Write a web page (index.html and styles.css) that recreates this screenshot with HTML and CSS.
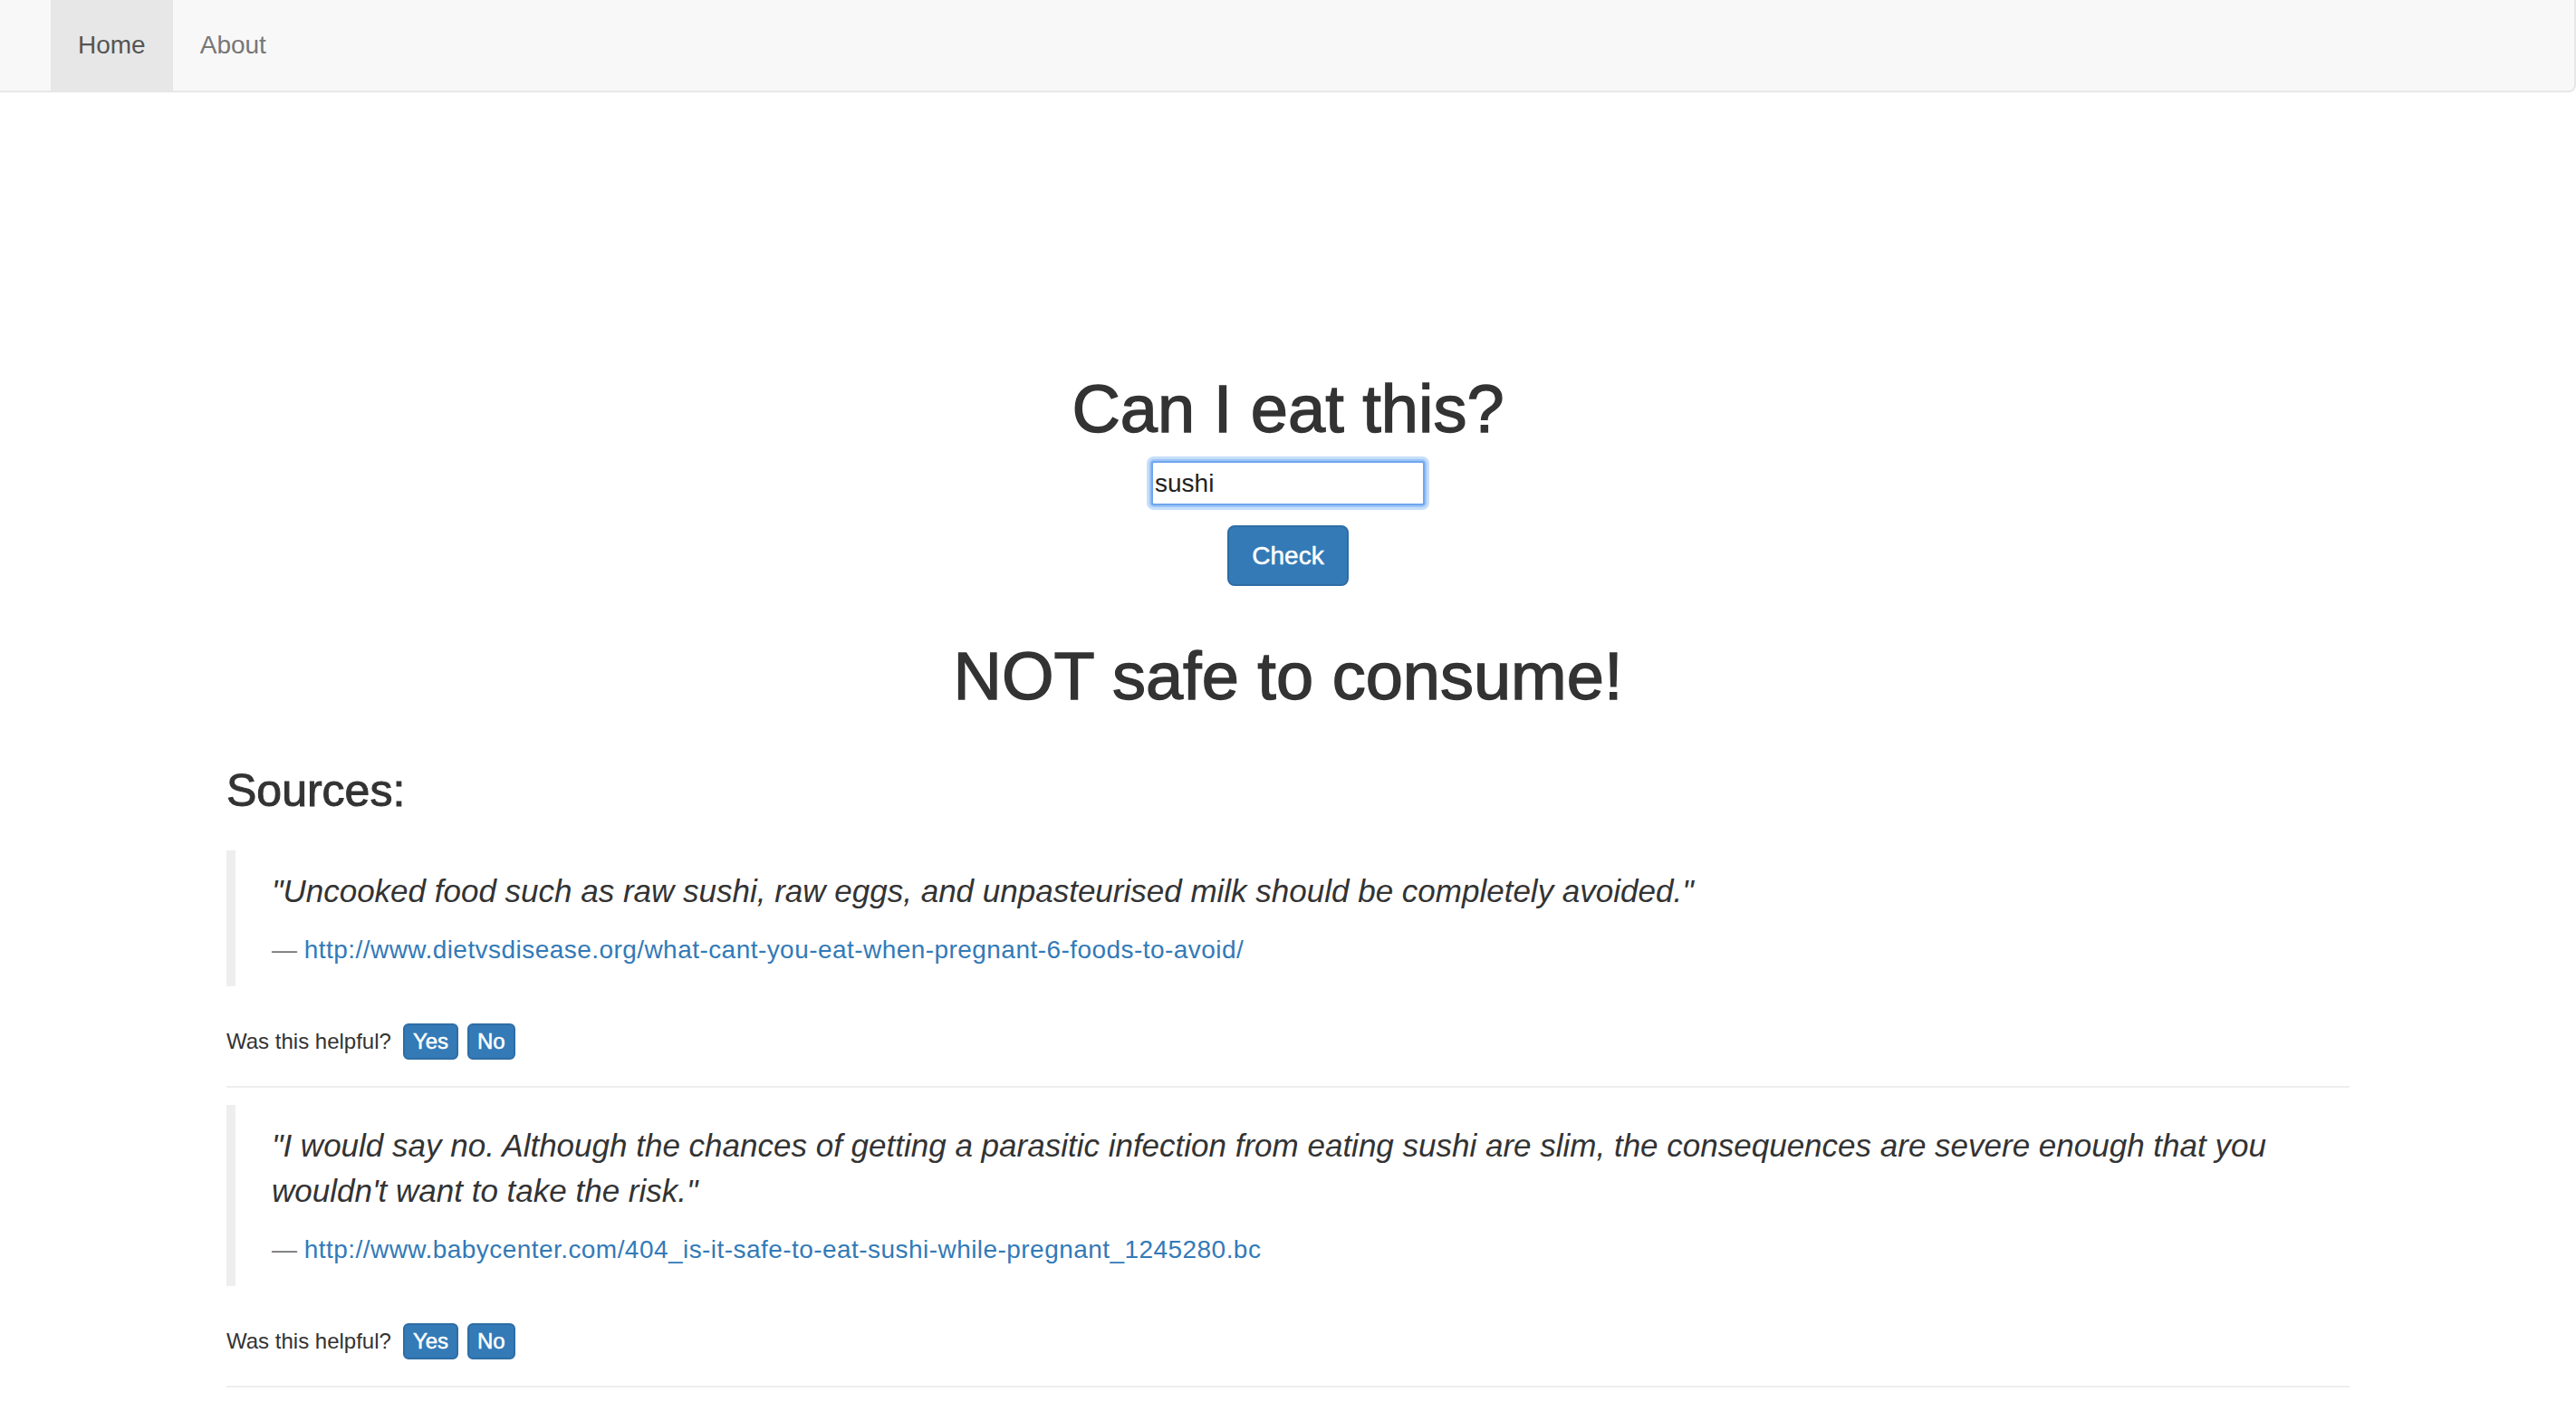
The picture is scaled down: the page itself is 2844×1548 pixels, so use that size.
FILE: index.html
```html
<!DOCTYPE html>
<html lang="en">
<head>
<meta charset="utf-8">
<title>Can I eat this?</title>
<link rel="stylesheet" href="styles.css">
</head>
<body>
<nav class="navbar">
  <ul class="nav">
    <li class="nav-item active"><a href="#">Home</a></li>
    <li class="nav-item"><a href="#">About</a></li>
  </ul>
</nav>
<main class="container">
  <section class="hero">
    <h1 class="title">Can I eat this?</h1>
    <form class="search">
      <input class="search-input" type="text" value="sushi">
      <button class="btn btn-check" type="button">Check</button>
    </form>
    <h1 class="verdict">NOT safe to consume!</h1>
  </section>
  <h3 class="sources-title">Sources:</h3>
  <div class="source">
    <blockquote class="quote">
      <p>"Uncooked food such as raw sushi, raw eggs, and unpasteurised milk should be completely avoided."</p>
      <footer><a href="#">http://www.dietvsdisease.org/what-cant-you-eat-when-pregnant-6-foods-to-avoid/</a></footer>
    </blockquote>
    <div class="feedback">
      <span class="feedback-label">Was this helpful?</span>
      <button class="btn btn-xs" type="button">Yes</button>
      <button class="btn btn-xs" type="button">No</button>
    </div>
    <hr class="divider">
  </div>
  <div class="source">
    <blockquote class="quote">
      <p>"I would say no. Although the chances of getting a parasitic infection from eating sushi are slim, the consequences are severe enough that you wouldn't want to take the risk."</p>
      <footer><a href="#">http://www.babycenter.com/404_is-it-safe-to-eat-sushi-while-pregnant_1245280.bc</a></footer>
    </blockquote>
    <div class="feedback">
      <span class="feedback-label">Was this helpful?</span>
      <button class="btn btn-xs" type="button">Yes</button>
      <button class="btn btn-xs" type="button">No</button>
    </div>
    <hr class="divider">
  </div>
</main>
</body>
</html>
```
FILE: styles.css
```css
* { box-sizing: border-box; }

html, body {
  margin: 0;
  padding: 0;
  background: #fff;
}

body {
  font-family: "Liberation Sans", Arial, Helvetica, sans-serif;
  font-size: 28px;
  line-height: 40px;
  color: #333;
}

a { color: #337ab7; text-decoration: none; }

/* Navbar */
.navbar {
  height: 102px;
  background: #f8f8f8;
  border-bottom: 2px solid #e7e7e7;
  border-right: 2px solid #e7e7e7;
  border-bottom-right-radius: 8px;
  padding-left: 56px;
}

.nav {
  display: flex;
  margin: 0;
  padding: 0;
  list-style: none;
  height: 100px;
}

.nav-item a {
  display: block;
  padding: 30px 30px;
  line-height: 40px;
  color: #777;
}

.nav-item.active a {
  background: #e7e7e7;
  color: #555;
}

/* Content */
.container {
  width: 2344px;
  margin: 0 auto;
}

.hero {
  display: flex;
  flex-direction: column;
  align-items: center;
  padding-top: 310px;
}

.title, .verdict {
  margin: 0;
  font-size: 74px;
  line-height: 79px;
  font-weight: 400;
  -webkit-text-stroke: 1.4px #333;
  color: #333;
}

.search {
  display: flex;
  flex-direction: column;
  align-items: center;
  margin: 18px 0 0;
}

.search-input {
  width: 302px;
  height: 49px;
  padding: 0 2px;
  font-family: "Liberation Sans", Arial, sans-serif;
  font-size: 28px;
  color: #222;
  border: 2px solid #6fa6ee;
  border-radius: 3px;
  box-shadow: 0 0 0 2px #9cc4f6, 0 0 0 5px #c6def9;
  outline: none;
  background: #fff;
}

.btn {
  font-family: "Liberation Sans", Arial, sans-serif;
  background: #337ab7;
  color: #fff;
  border: 2px solid #2e6da4;
  cursor: pointer;
  -webkit-text-stroke: 0.5px #fff;
}

.btn-check {
  margin-top: 22px;
  width: 134px;
  height: 67px;
  font-size: 28px;
  border-radius: 8px;
  padding: 0;
}

.verdict {
  margin-top: 60px;
}

.sources-title {
  margin: 61px 0 0;
  font-size: 50px;
  line-height: 53px;
  font-weight: 400;
  -webkit-text-stroke: 1px #333;
}

/* Quotes */
.quote {
  margin: 39px 0 0;
  padding: 20px 40px;
  border-left: 10px solid #eee;
  font-size: 35px;
  line-height: 50px;
  font-style: italic;
}

.source + .source .quote {
  margin-top: 0;
}

.quote p {
  margin: 0 0 20px;
}

.quote footer {
  font-size: 28px;
  line-height: 40px;
  font-style: normal;
  color: #777;
}

.quote footer a {
  letter-spacing: 0.45px;
}

.quote footer::before {
  content: "\2014\00A0";
}

.feedback {
  display: flex;
  align-items: center;
  margin-top: 41px;
  height: 40px;
  font-size: 24px;
}

.feedback-label {
  margin-right: 13px;
}

.btn-xs {
  height: 40px;
  padding: 0 9px;
  font-size: 24px;
  border-radius: 6px;
  margin-right: 10px;
}

.divider {
  margin: 29px 0 19px;
  border: 0;
  border-top: 2px solid #eee;
  height: 0;
}
```
